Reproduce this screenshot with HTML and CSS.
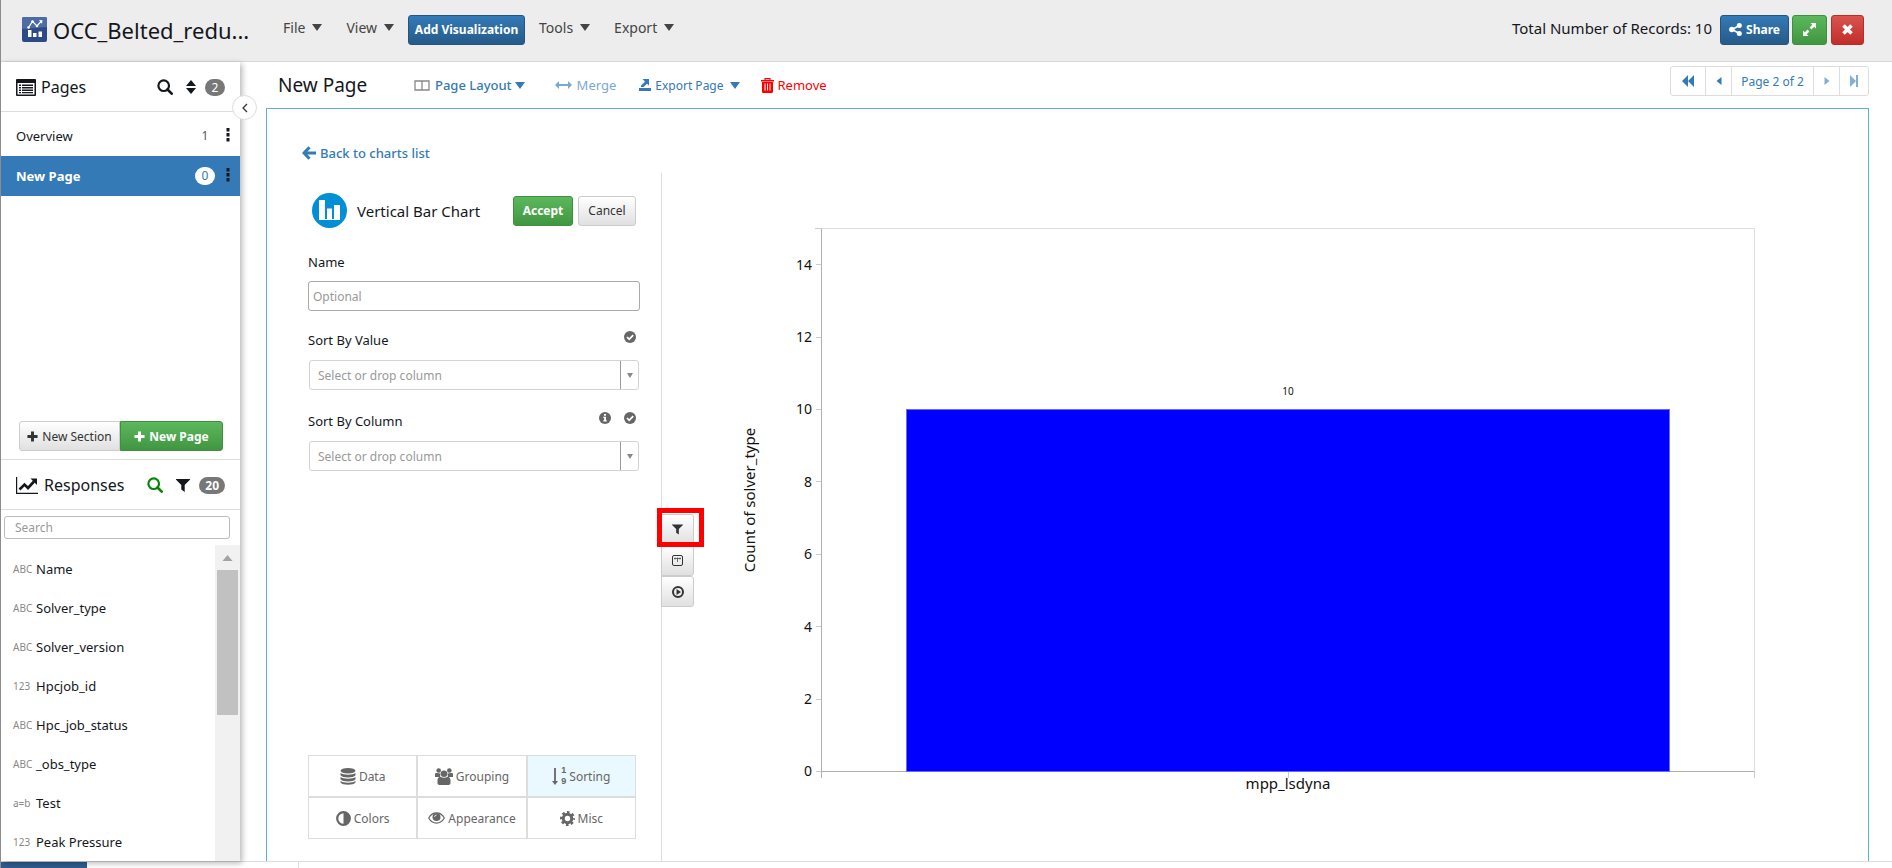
FILE: index.html
```html
<!DOCTYPE html>
<html lang="en">
<head>
  <meta charset="UTF-8" />
  <meta name="viewport" content="width=device-width, initial-scale=1.0"/>
  <title>OCC_Belted_redu... - New Page</title>
  <link rel="stylesheet" href="styles.css">
</head>
<body>
  <!-- icon set -->
  <svg class="sprite" aria-hidden="true">
    <symbol id="i-caret" viewBox="0 0 10 7"><path d="M0 0h10L5 7z"/></symbol>
    <symbol id="i-search" viewBox="0 0 16 16"><circle cx="6.7" cy="6.7" r="5.3" fill="none" stroke="currentColor" stroke-width="2.2"/><path d="M10.5 10.5l4.2 4.2" stroke="currentColor" stroke-width="2.6" stroke-linecap="round"/></symbol>
    <symbol id="i-sort" viewBox="0 0 10 14"><path d="M5 0l5 6H0zM5 14l5-6H0z"/></symbol>
    <symbol id="i-dots" viewBox="0 0 4 14"><path d="M.5 0h3v3.500h-3zM.5 5h3v3.500h-3zM.5 10h3v3.500h-3z"/></symbol>
    <symbol id="i-plus" viewBox="0 0 12 12"><path d="M4.400.5h3.200v3.900h3.900v3.200H7.600v3.900H4.400V7.600H.5V4.400h3.900z"/></symbol>
    <symbol id="i-filter" viewBox="0 0 14 13"><path d="M.3 0h13.400c.4 0 .5.500.2.800L8.700 6v7L5.300 10.500V6L.1.800C-.2.500-.1 0 .3 0z"/></symbol>
    <symbol id="i-check" viewBox="0 0 12 12"><circle cx="6" cy="6" r="6"/><path d="M3 6l2.200 2.300L9.200 4.200" fill="none" stroke="#fff" stroke-width="1.800"/></symbol>
    <symbol id="i-info" viewBox="0 0 12 12"><circle cx="6" cy="6" r="6"/><path d="M5 2h2v1.700H5zM4.300 4.800H7v3.400h.8v1.300H4.300V8.200h.8V6h-.8z" fill="#fff"/></symbol>
  </svg>

  <header class="topbar">
    <svg class="logo" viewBox="0 0 25 25">
      <rect width="25" height="25" rx="2" fill="#2c4a85"/>
      <path d="M0 12V2a2 2 0 0 1 2-2h21a2 2 0 0 1 2 2v8z" fill="#4d6ba5"/>
      <path d="M6.500 10.500l4-6 4.500 4.500 4-4.500" fill="none" stroke="#fff" stroke-width="1.200"/>
      <circle cx="6.500" cy="10.500" r="1.300" fill="#fff"/><circle cx="10.500" cy="4.500" r="1.300" fill="#fff"/><circle cx="15" cy="9" r="1.300" fill="#fff"/><path d="M17 3l3.500.2-.5 3.500z" fill="#fff"/>
      <path d="M6 13h3.500v7H6zM11 16h3.500v4H11zM16.500 14.500H20V20h-3.500z" fill="#fff"/>
    </svg>
    <h1 class="doc-title">OCC_Belted_redu...</h1>
    <nav class="menus">
      <div class="menu-group">
        <button class="menu">File <svg class="caret"><use href="#i-caret"/></svg></button>
        <button class="menu">View <svg class="caret"><use href="#i-caret"/></svg></button>
      </div>
      <button class="btn btn-primary add-vis">Add Visualization</button>
      <div class="menu-group">
        <button class="menu">Tools <svg class="caret"><use href="#i-caret"/></svg></button>
        <button class="menu">Export <svg class="caret"><use href="#i-caret"/></svg></button>
      </div>
    </nav>
    <div class="topbar-right">
      <span class="records">Total Number of Records: 10</span>
      <button class="btn btn-primary share">
        <svg class="icon-13" viewBox="0 0 13 13"><path d="M10 2.700L3 6.500l7 3.800" fill="none" stroke="currentColor" stroke-width="1.600"/><circle cx="10.300" cy="2.600" r="2.500"/><circle cx="2.800" cy="6.500" r="2.700"/><circle cx="10.300" cy="10.400" r="2.500"/></svg>
        Share
      </button>
      <button class="btn btn-success expand" aria-label="Full screen">
        <svg class="icon-13" viewBox="0 0 13 13"><path d="M7.500 0H13v5.500l-1.800-1.800-2.700 2.700-1.900-1.900 2.700-2.700zM5.500 13H0V7.500l1.800 1.800 2.700-2.700 1.900 1.900-2.700 2.700z"/></svg>
      </button>
      <button class="btn btn-danger close" aria-label="Close">
        <svg class="icon-11" viewBox="0 0 11 11"><path d="M1.500 1.500l8 8M9.500 1.500l-8 8" stroke="currentColor" stroke-width="3.600"/></svg>
      </button>
    </div>
  </header>

  <div class="workspace">
    <aside class="sidebar">
      <button class="collapse" aria-label="Collapse sidebar">
        <svg viewBox="0 0 6 10"><path d="M5 1L1 5l4 4" fill="none" stroke="currentColor" stroke-width="1.300"/></svg>
      </button>
      <section class="pages">
        <div class="side-head">
          <svg class="list-icon" viewBox="0 0 20 17"><path d="M1 0h18a1 1 0 0 1 1 1v15a1 1 0 0 1-1 1H1a1 1 0 0 1-1-1V1a1 1 0 0 1 1-1zm.5 4v11.500h17V4z" fill-rule="evenodd"/><path d="M3 5.500h2V7H3zM6 5.500h11V7H6zM3 8h2v1.400H3zM6 8h11v1.400H6zM3 10.500h2v1.400H3zM6 10.500h11v1.400H6zM3 13h2v1.300H3zM6 13h11v1.300H6z"/></svg>
          <h2>Pages</h2>
          <svg class="icon-16 push"><use href="#i-search"/></svg>
          <svg class="sort-icon"><use href="#i-sort"/></svg>
          <span class="badge">2</span>
        </div>
        <ul class="page-list">
          <li><a href="#overview">Overview</a><span class="count">1</span><svg class="dots"><use href="#i-dots"/></svg></li>
          <li class="active"><a href="#new">New Page</a><span class="count">0</span><svg class="dots"><use href="#i-dots"/></svg></li>
        </ul>
        <div class="page-actions">
          <button class="btn btn-default new-section"><svg class="icon-11"><use href="#i-plus"/></svg>New Section</button>
          <button class="btn btn-success new-page"><svg class="icon-11"><use href="#i-plus"/></svg>New Page</button>
        </div>
      </section>

      <section class="responses">
        <div class="side-head">
          <svg class="trend-icon" viewBox="0 0 22 17"><path d="M.6 0v16.400H22" fill="none" stroke="currentColor" stroke-width="1.200"/><path d="M3.500 12.500l5-5 3.500 3.500 6-6.500" fill="none" stroke="currentColor" stroke-width="2.600"/><path d="M14.500 1.500H21V8z"/></svg>
          <h2>Responses</h2>
          <svg class="icon-16 push green"><use href="#i-search"/></svg>
          <svg class="filter-icon"><use href="#i-filter"/></svg>
          <span class="badge badge-bold">20</span>
        </div>
        <input class="side-search" type="text" placeholder="Search" aria-label="Search responses">
        <div class="response-scroll">
          <ul class="response-list">
            <li><span>ABC</span>Name</li>
            <li><span>ABC</span>Solver_type</li>
            <li><span>ABC</span>Solver_version</li>
            <li><span>123</span>Hpcjob_id</li>
            <li><span>ABC</span>Hpc_job_status</li>
            <li><span>ABC</span>_obs_type</li>
            <li><span>a=b</span>Test</li>
            <li><span>123</span>Peak Pressure</li>
          </ul>
          <div class="scrollbar">
            <svg class="scroll-up" viewBox="0 0 10 6"><path d="M5 0l5 6H0z"/></svg>
            <div class="thumb"></div>
          </div>
        </div>
      </section>
    </aside>

    <main class="main">
      <div class="page-toolbar">
        <h2 class="page-title">New Page</h2>
        <button class="tool layout">
          <svg class="layout-icon" viewBox="0 0 16 11"><path d="M1 1h14v9H1zM8 1v9" fill="none" stroke="currentColor" stroke-width="1.300"/></svg>
          Page Layout<svg class="caret"><use href="#i-caret"/></svg>
        </button>
        <button class="tool merge" disabled>
          <svg class="merge-icon" viewBox="0 0 17 8"><path d="M4 0v3h9V0l4 4-4 4V5H4v3L0 4z"/></svg>
          Merge
        </button>
        <button class="tool export">
          <svg class="icon-12" viewBox="0 0 12 12"><path d="M0 9h12v3H0zM3.500 0H10v6.500L8 4.700 4.500 8H2V6.500l4-3.800z"/></svg>
          Export Page<svg class="caret caret-gap"><use href="#i-caret"/></svg>
        </button>
        <button class="tool remove">
          <svg class="trash-icon" viewBox="0 0 13 15"><path d="M4 2V.6h5V2" fill="none" stroke="currentColor" stroke-width="1.200"/><path d="M0 2h13v1.500H0zM1 4h11v9.500c0 .8-.5 1.500-1.300 1.500H2.300C1.500 15 1 14.300 1 13.500z"/><path d="M4 5.500v7M6.500 5.500v7M9 5.500v7" stroke="#fff"/></svg>
          Remove
        </button>
        <div class="pager">
          <button aria-label="First page"><svg class="icon-12" viewBox="0 0 12 12"><path d="M6 0v12L0 6zM12 0v12L6 6z"/></svg></button>
          <button aria-label="Previous page"><svg class="icon-8" viewBox="0 0 8 8"><path d="M6.500 0v8L1.500 4z"/></svg></button>
          <button class="pager-label">Page 2 of 2</button>
          <button aria-label="Next page" disabled><svg class="icon-8" viewBox="0 0 8 8"><path d="M1.500 0v8l5-4z"/></svg></button>
          <button aria-label="Last page" disabled><svg class="icon-12" viewBox="0 0 12 12"><path d="M2 0v12l6-6zM8 0h2v12H8z"/></svg></button>
        </div>
      </div>

      <div class="canvas">
        <a class="back" href="#charts">
          <svg class="icon-14" viewBox="0 0 14 14"><path d="M7.500 1.200L2 7l5.500 5.800M2 7h12" fill="none" stroke="currentColor" stroke-width="3"/></svg>
          Back to charts list
        </a>
        <div class="editor">
          <form class="settings">
            <div class="chart-head">
              <svg class="chart-icon" viewBox="0 0 35 35"><circle cx="17.500" cy="17.500" r="17.500" fill="#028fd6"/><path d="M7 7h6v20H7zM15 15.500h5V27h-5zM22 12h6v15h-6zM7 26h21v1H7z" fill="#fff"/></svg>
              <h3>Vertical Bar Chart</h3>
              <button type="button" class="btn btn-success accept">Accept</button>
              <button type="button" class="btn btn-default cancel">Cancel</button>
            </div>
            <div class="field-label"><label for="name">Name</label></div>
            <input class="name-input" id="name" type="text" placeholder="Optional">
            <div class="field-label">
              <label for="sortValue">Sort By Value</label>
              <svg class="icon-12"><use href="#i-check"/></svg>
            </div>
            <div class="combo">
              <select id="sortValue"><option>Select or drop column</option></select>
              <span class="combo-arrow"><svg viewBox="0 0 6 5"><path d="M0 0h6L3 5z"/></svg></span>
            </div>
            <div class="field-label">
              <label for="sortColumn">Sort By Column</label>
              <svg class="icon-12"><use href="#i-info"/></svg>
              <svg class="icon-12"><use href="#i-check"/></svg>
            </div>
            <div class="combo">
              <select id="sortColumn"><option>Select or drop column</option></select>
              <span class="combo-arrow"><svg viewBox="0 0 6 5"><path d="M0 0h6L3 5z"/></svg></span>
            </div>

            <div class="setting-tabs">
              <button type="button"><svg viewBox="0 0 16 17" width="16" height="17"><ellipse cx="8" cy="2.800" rx="7.500" ry="2.800"/><path d="M.5 5c3 2.300 12 2.300 15 0v2.300c-2 3-13 3-15 0zM.5 9c3 2.300 12 2.300 15 0v2.300c-2 3-13 3-15 0zM.5 13c3 2.300 12 2.300 15 0v1.500c-2 3-13 3-15 0z"/></svg>Data</button>
              <button type="button"><svg viewBox="0 0 18 17" width="18" height="17"><circle cx="3.700" cy="2.500" r="2.300"/><circle cx="14.300" cy="2.500" r="2.300"/><path d="M0 9V6.500C0 5 1 4.800 2 5l3.500.5L5 9zM18 9V6.500c0-1.500-1-1.700-2-1.500l-3.500.5L13 9z"/><circle cx="9" cy="5.800" r="3.300"/><path d="M2.500 15v-3c0-2 1.300-3.300 3-3.300 2 1.500 5 1.500 7 0 1.700 0 3 1.300 3 3.300v3c0 1-.8 2-2 2h-9c-1.200 0-2-1-2-2z"/></svg>Grouping</button>
              <button type="button" class="active"><svg viewBox="0 0 6 17" width="6" height="17"><path d="M2.100 0h1.800v13h2.100l-3 4-3-4h2.100z"/></svg><span class="sort-digits"><b>1</b><b>9</b></span>Sorting</button>
              <button type="button"><svg viewBox="0 0 15 15" width="15" height="15"><circle cx="7.500" cy="7.500" r="6.300" fill="none" stroke="currentColor" stroke-width="2.200"/><path d="M7.500 1.500a6 6 0 0 1 0 12z"/></svg>Colors</button>
              <button type="button"><svg viewBox="0 0 17 12" width="17" height="12"><path d="M.7 6C4.500-.8 12.500-.8 16.300 6 12.500 12.800 4.500 12.800.7 6z" fill="none" stroke="currentColor" stroke-width="1.200"/><circle cx="8.500" cy="5" r="4"/><path d="M6.500 5a2 2 0 0 1 2-2" fill="none" stroke="#fff" stroke-width=".8"/></svg>Appearance</button>
              <button type="button"><svg viewBox="0 0 15 15" width="15" height="15"><circle cx="7.500" cy="7.500" r="4.200" fill="none" stroke="currentColor" stroke-width="3"/><circle cx="7.500" cy="7.500" r="6.300" fill="none" stroke="currentColor" stroke-width="2.400" stroke-dasharray="2.600 2.348" stroke-dashoffset="1.300"/></svg>Misc</button>
            </div>
          </form>

          <div class="preview">
            <div class="side-tools">
              <button class="btn btn-default marked" aria-label="Filter"><svg class="icon-11"><use href="#i-filter"/></svg></button>
              <button class="btn btn-default" aria-label="Axis range"><svg class="icon-11" viewBox="0 0 11 11"><rect x=".5" y=".5" width="10" height="10" rx="1.500" fill="none" stroke="currentColor"/><path d="M2 3.500h7M5.500 2.500v4.500M3 2.500v2M8 2.500v2" stroke="currentColor" stroke-width=".7"/></svg></button>
              <button class="btn btn-default" aria-label="Play"><svg class="icon-12" viewBox="0 0 12 12"><circle cx="6" cy="6" r="5" fill="none" stroke="currentColor" stroke-width="2"/><path d="M4.500 3l4.500 3-4.500 3z"/></svg></button>
            </div>
            <svg class="chart" viewBox="0 0 1206 688" role="img" aria-label="Count of solver_type by solver type">
              <path class="frame" d="M159.500 55.500H1092.500V598.500"/>
              <path class="axis" d="M159.500 55.500V605M159.500 598.500H1092.500"/>
              <path class="ticks" d="M153 55.500h6M154 91.500h5M154 164.500h5M154 236.500h5M154 308.500h5M154 381.500h5M154 453.500h5M154 526.500h5M154 598.500h5M626.500 599v6M1092.500 599v6"/>
              <rect class="bar" x="244.500" y="236.500" width="763" height="362"/>
              <g class="y-labels">
                <text x="150" y="97">14</text>
                <text x="150" y="169">12</text>
                <text x="150" y="241">10</text>
                <text x="150" y="314">8</text>
                <text x="150" y="386">6</text>
                <text x="150" y="459">4</text>
                <text x="150" y="531">2</text>
                <text x="150" y="603">0</text>
              </g>
              <text class="bar-value" x="626" y="222">10</text>
              <text class="x-label" x="626" y="616">mpp_lsdyna</text>
              <text class="y-title" transform="translate(93 327) rotate(-90)">Count of solver_type</text>
            </svg>
          </div>
        </div>
      </div>
    </main>
  </div>

  <footer class="status"><div class="status-progress"></div><div class="status-tab"></div></footer>
</body>
</html>
```

FILE: styles.css
```css
* {
  box-sizing: border-box;
}
body {
  margin: 0;
  height: 100vh;
  display: flex;
  flex-direction: column;
  overflow: hidden;
  border-left: 1px solid #8c8c8c;
  font-family: "Noto Sans", "Open Sans", sans-serif;
  font-size: 13px;
  color: #14171c;
  background-color: #fff;
}
h1, h2, h3, ul {
  margin: 0;
  padding: 0;
  font-weight: 400;
}
ul {
  list-style: none;
}
a {
  text-decoration: none;
}
button, input, select {
  font-family: inherit;
}
svg {
  fill: currentColor;
  flex-shrink: 0;
}
.sprite {
  position: absolute;
  width: 0;
  height: 0;
}
.caret {
  width: 10px;
  height: 7px;
}
.icon-8 { width: 8px; height: 8px; }
.icon-11 { width: 11px; height: 11px; }
.icon-12 { width: 12px; height: 12px; }
.icon-13 { width: 13px; height: 13px; }
.icon-14 { width: 14px; height: 14px; }
.icon-16 { width: 16px; height: 16px; }

/* buttons */
.btn {
  display: inline-flex;
  align-items: center;
  justify-content: center;
  gap: 4px;
  height: 30px;
  padding: 0;
  border: 1px solid;
  border-radius: 3px;
  font-size: 12px;
  font-weight: 700;
  white-space: nowrap;
  color: #fff;
}
.btn-primary {
  background: linear-gradient(#337ab7, #265a88);
  border-color: #245580;
}
.btn-success {
  background: linear-gradient(#5cb85c, #419641);
  border-color: #3e8f3e;
}
.btn-danger {
  background: linear-gradient(#d9534f, #c12e2a);
  border-color: #b92c28;
}
.btn-default {
  background: linear-gradient(#fff, #e0e0e0);
  border-color: #ccc;
  color: #333;
  font-weight: 400;
}

/* top bar */
.topbar {
  display: flex;
  align-items: center;
  flex-shrink: 0;
  height: 62px;
  padding: 0 28px 2px 21px;
  background-color: #ededed;
  border-bottom: 1px solid #d8d8d8;
}
.logo {
  width: 25px;
  height: 25px;
}
.doc-title {
  width: 230px;
  margin-left: 6px;
  font-size: 22px;
  line-height: 30px;
  white-space: nowrap;
}
.menus, .menu-group {
  display: flex;
  align-items: center;
  gap: 14px;
}
.menu-group {
  gap: 24px;
}
.menu {
  display: flex;
  align-items: center;
  gap: 7px;
  padding: 0 0 4px;
  border: none;
  background: none;
  font-size: 14px;
  color: #444;
}
.add-vis {
  width: 117px;
}
.topbar-right {
  display: flex;
  align-items: center;
  margin-left: auto;
}
.records {
  margin-right: 8px;
  padding-bottom: 4px;
  font-size: 15px;
}
.share {
  width: 69px;
  margin-right: 3px;
}
.expand {
  width: 35px;
  margin-right: 4px;
}
.close {
  width: 33px;
}

/* sidebar */
.workspace {
  display: flex;
  flex: 1;
  min-height: 0;
}
.sidebar {
  position: relative;
  z-index: 1;
  display: flex;
  flex-direction: column;
  flex-shrink: 0;
  width: 239px;
  box-shadow: 2px 2px 6px rgba(0, 0, 0, 0.3);
}
.collapse {
  position: absolute;
  top: 33px;
  right: -17px;
  width: 25px;
  height: 25px;
  padding: 0;
  border: 1px solid #ddd;
  border-radius: 50%;
  background-color: #fff;
  color: #333;
}
.collapse svg {
  display: block;
  width: 6px;
  height: 10px;
  margin: auto;
}
.pages {
  display: flex;
  flex-direction: column;
  height: 398px;
  border-bottom: 1px solid #ddd;
}
.side-head {
  display: flex;
  align-items: center;
  height: 50px;
  padding: 1px 15px 0;
  border-bottom: 1px solid #ddd;
}
.side-head h2 {
  font-size: 16px;
}
.list-icon {
  width: 20px;
  height: 17px;
  margin-right: 5px;
}
.trend-icon {
  width: 22px;
  height: 17px;
  margin-right: 6px;
}
.push {
  margin-left: auto;
  margin-right: 13px;
}
.sort-icon {
  width: 10px;
  height: 14px;
  margin-right: 9px;
}
.filter-icon {
  width: 14px;
  height: 13px;
  margin-right: 9px;
}
.green {
  color: #078307;
}
.badge {
  min-width: 20px;
  padding: 0 6px;
  border-radius: 9px;
  background-color: #777;
  color: #fff;
  font-size: 12px;
  line-height: 17px;
  text-align: center;
}
.badge-bold {
  font-weight: 700;
}
.page-list li {
  display: flex;
  align-items: center;
  height: 40px;
  padding: 0 10px 0 15px;
}
.page-list li:first-child {
  height: 44px;
  padding-top: 4px;
}
.page-list a {
  flex: 1;
  color: #14171c;
}
.page-list .active {
  background-color: #337ab7;
}
.page-list .active a {
  color: #fff;
  font-weight: 700;
}
.count {
  width: 20px;
  margin-right: 11px;
  border-radius: 9px;
  color: #555;
  font-size: 12px;
  line-height: 18px;
  text-align: center;
}
.active .count {
  background-color: #fff;
  color: #337ab7;
}
.dots {
  width: 4px;
  height: 14px;
  margin-bottom: 3px;
}
.page-actions {
  display: flex;
  margin: auto 15px 8px 18px;
}
.new-section {
  width: 101px;
  border-radius: 3px 0 0 3px;
}
.new-page {
  width: 103px;
  border-radius: 0 3px 3px 0;
}
.responses {
  display: flex;
  flex-direction: column;
  flex: 1;
  min-height: 0;
}
.side-search {
  height: 23px;
  margin: 6px 10px 6px 3px;
  padding: 0 10px;
  border: 1px solid #bbb;
  border-radius: 3px;
  font-size: 12px;
}
::placeholder {
  color: #999;
}
.response-scroll {
  display: flex;
  flex: 1;
  min-height: 0;
  overflow: hidden;
}
.response-list {
  flex: 1;
  padding-top: 4px;
}
.response-list li {
  display: flex;
  align-items: center;
  height: 39px;
  padding-left: 12px;
}
.response-list span {
  width: 23px;
  color: #888;
  font-size: 10px;
}
.scrollbar {
  width: 25px;
  padding: 10px 2px 0;
  background-color: #f1f1f1;
}
.scroll-up {
  display: block;
  width: 11px;
  height: 6px;
  margin: 0 auto 9px;
  color: #a3a3a3;
}
.thumb {
  height: 145px;
  background-color: #c1c1c1;
}

/* page toolbar */
.main {
  display: flex;
  flex-direction: column;
  flex: 1;
  min-width: 0;
  padding: 0 23px 0 26px;
}
.page-toolbar {
  display: flex;
  align-items: center;
  flex-shrink: 0;
  height: 46px;
  padding-left: 12px;
}
.page-title {
  width: 136px;
  font-size: 19px;
}
.tool {
  display: flex;
  align-items: center;
  gap: 5px;
  padding: 0;
  border: none;
  background: none;
  color: #337ab7;
  font-size: 13px;
  white-space: nowrap;
}
.tool .caret {
  margin-left: -2px;
}
.tool .caret-gap {
  margin-left: 2px;
}
.layout {
  margin-right: 30px;
  font-weight: 500;
}
.layout-icon {
  width: 16px;
  height: 11px;
  color: #888;
}
.merge {
  margin-right: 23px;
  opacity: 0.65;
}
.merge-icon {
  width: 17px;
  height: 8px;
}
.export {
  gap: 4px;
  margin-right: 21px;
  font-size: 12px;
}
.remove {
  gap: 4px;
  color: #f00;
}
.trash-icon {
  width: 13px;
  height: 15px;
}
.pager {
  display: flex;
  align-self: flex-start;
  height: 30px;
  margin: 4px 0 0 auto;
  border: 1px solid #ddd;
  border-radius: 3px;
}
.pager button {
  display: flex;
  align-items: center;
  justify-content: center;
  width: 26px;
  padding: 0;
  border: none;
  border-right: 1px solid #ddd;
  background: none;
  color: #337ab7;
  font-size: 12px;
}
.pager button:first-child {
  width: 35px;
}
.pager button:last-child {
  width: 28px;
  border-right: none;
}
.pager .pager-label {
  width: 82px;
}
.pager button:disabled svg {
  opacity: 0.6;
}

/* chart editor */
.canvas {
  display: flex;
  flex-direction: column;
  flex: 1;
  min-height: 0;
  border: 1px solid #5dade8;
  border-bottom: none;
}
.back {
  display: flex;
  align-items: center;
  gap: 4px;
  height: 64px;
  padding: 24px 0 0 35px;
  color: #337ab7;
  font-weight: 500;
}
.editor {
  display: flex;
  flex: 1;
  min-height: 0;
}
.settings {
  display: flex;
  flex-direction: column;
  flex-shrink: 0;
  width: 395px;
  padding: 20px 21px 22px 41px;
  border-right: 1px solid #ddd;
}
.chart-head {
  display: flex;
  align-items: center;
  margin: 0 4px 18px;
}
.chart-icon {
  width: 35px;
  height: 35px;
  margin-right: 10px;
}
.chart-head h3 {
  flex: 1;
  font-size: 15px;
  white-space: nowrap;
}
.accept {
  width: 60px;
  margin-right: 5px;
}
.cancel {
  width: 58px;
}
.field-label {
  display: flex;
  align-items: center;
  gap: 13px;
  height: 32px;
  padding-right: 4px;
  font-size: 13px;
}
.field-label label {
  flex: 1;
}
.field-label svg {
  margin-bottom: 7px;
  color: #666;
}
.name-input {
  height: 30px;
  margin: 3px 0 13px;
  padding: 0 4px;
  border: 1px solid #aaa;
  border-radius: 3px;
  font-size: 12px;
}
.combo {
  display: flex;
  height: 30px;
  margin: 4px 1px 15px;
  border: 1px solid #d3d3d3;
  border-radius: 3px;
}
.combo select {
  flex: 1;
  padding: 0 8px;
  border: none;
  border-right: 1px solid #999;
  background: none;
  appearance: none;
  color: #999;
  font-size: 12px;
}
.combo-arrow {
  display: flex;
  align-items: center;
  justify-content: center;
  width: 17px;
  color: #888;
}
.combo-arrow svg {
  width: 6px;
  height: 5px;
}
.setting-tabs {
  display: grid;
  grid-template-columns: repeat(3, minmax(0, 1fr));
  gap: 2px;
  width: 328px;
  margin-top: auto;
  border: 1px solid #ddd;
  background-color: #ddd;
}
.setting-tabs button {
  display: flex;
  align-items: center;
  justify-content: center;
  gap: 3px;
  height: 40px;
  padding: 0;
  border: none;
  background-color: #fff;
  color: #666;
  font-size: 12px;
}
.setting-tabs .active {
  background-color: #e9f9ff;
}
.sort-digits {
  display: flex;
  flex-direction: column;
  font-family: "Liberation Sans", sans-serif;
  font-size: 9px;
  line-height: 11px;
}

/* chart preview */
.preview {
  position: relative;
  flex: 1;
  min-width: 0;
}
.side-tools {
  position: absolute;
  top: 341px;
  left: -1px;
  display: flex;
  flex-direction: column;
}
.side-tools .btn {
  width: 33px;
  height: 31px;
  border-radius: 0 3px 3px 0;
}
.marked {
  position: relative;
}
.marked::after {
  content: "";
  position: absolute;
  inset: -7px -11px -3px -5px;
  border: 5px solid #f00;
}
.chart {
  display: block;
  width: 100%;
}
.chart text {
  font-size: 15px;
  fill: #111;
}
.frame {
  fill: none;
  stroke: #ddd;
}
.axis {
  fill: none;
  stroke: #b0b0b0;
}
.ticks {
  stroke: #ccc;
}
.bar {
  fill: #00f;
  stroke: #6a6af0;
}
.y-labels {
  text-anchor: end;
}
.chart .y-labels text {
  font-size: 14px;
}
.chart .bar-value {
  font-size: 10px;
  text-anchor: middle;
}
.x-label, .y-title {
  text-anchor: middle;
}

/* bottom strip */
.status {
  display: flex;
  flex-shrink: 0;
  height: 7px;
  border-top: 1px solid #ddd;
}
.status-progress {
  width: 86px;
  background-color: #2f5b8d;
}
.status-tab {
  width: 212px;
  border-right: 1px solid #ddd;
}
```
